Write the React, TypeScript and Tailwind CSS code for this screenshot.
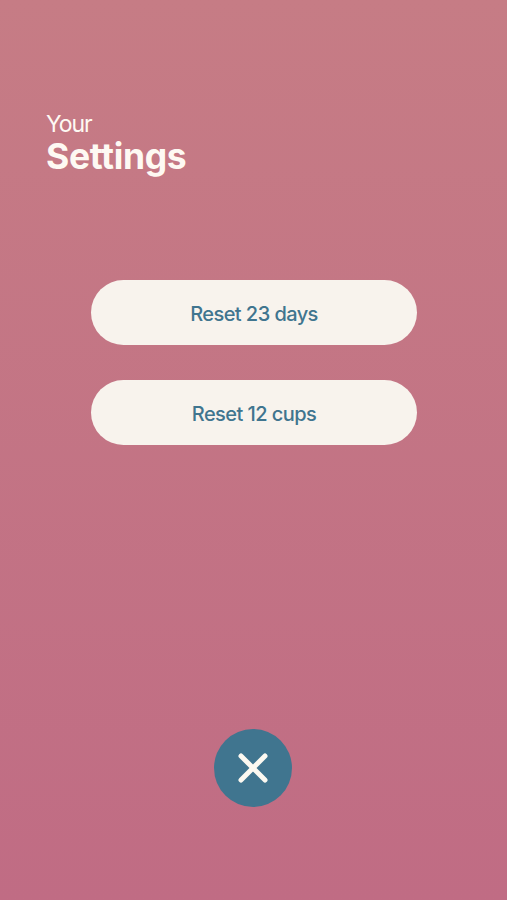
const resets = ['Reset 23 days', 'Reset 12 cups']

function ResetButton ({label}:{label:string}) {
    return (
        <button className="w-[326px] h-[65px] flex justify-center items-center rounded-full bg-[#f8f3ed] text-[#40758f] text-[20px] font-medium tracking-[-0.56px] pt-[3px] pl-px cursor-pointer">
            {label}
        </button>
    )
}

function CloseButton () {
    return (
        <button aria-label="Close" className="w-[78px] h-[78px] mr-px flex justify-center items-center rounded-full bg-[#40758f] cursor-pointer">
            <svg width="30" height="30" viewBox="0 0 30 30" fill="none" stroke="#fcf9f1" strokeWidth="5" strokeLinecap="round">
                <path d="M3 3 27 27M27 3 3 27" />
            </svg>
        </button>
    )
}

export default function App () {
    return (
        <div className="w-full h-screen flex flex-col justify-between items-center pt-[111px] pb-[93px] bg-linear-to-b from-[#c67c85] to-[#c06c84] font-['Inter',sans-serif]">
            <div className="w-full flex flex-col items-center">
                <h1 className="w-full px-[46px] text-[#fef9f3]">
                    <span className="block text-[23px] leading-[27px] font-normal tracking-[-1.1px]">Your</span>
                    <span className="block text-[35.5px] leading-[38px] font-bold tracking-[-0.35px]">Settings</span>
                </h1>
                <div className="flex flex-col gap-[35px] mt-[103.6px]">
                    {resets.map((label)=>
                        <ResetButton key={label} label={label} />
                    )}
                </div>
            </div>
            <CloseButton />
        </div>
    )
}
